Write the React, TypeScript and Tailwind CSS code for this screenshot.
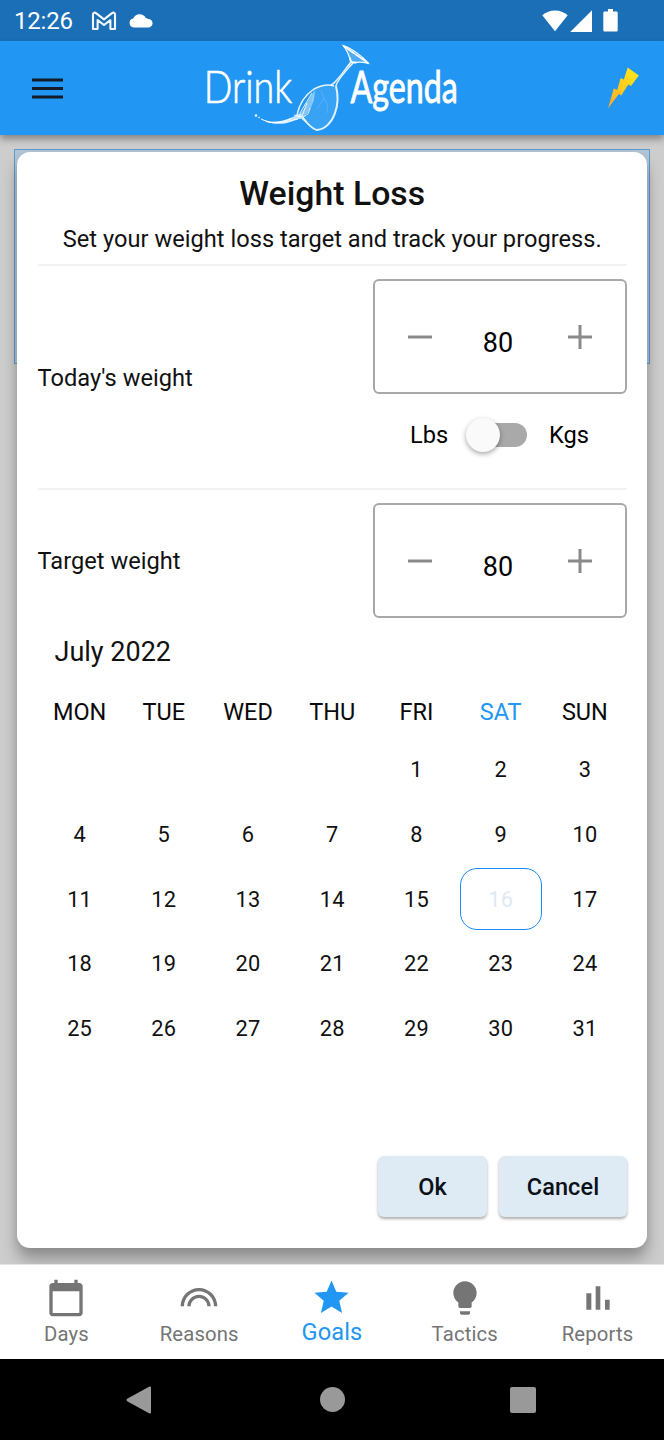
import type { ReactNode } from "react";

const WEEKDAYS = ["MON", "TUE", "WED", "THU", "FRI", "SAT", "SUN"];
const LEADING_BLANKS = 4;
const DAYS: (number | null)[] = [
  ...Array.from({ length: LEADING_BLANKS }, () => null),
  ...Array.from({ length: 31 }, (_, i) => i + 1),
];
const TODAY = 16;

function StatusBar() {
  return (
    <div className="flex h-[41px] shrink-0 items-center bg-[#1a6fb6] pl-3.5 text-white">
      <span className="w-[77px] pt-px text-[24px] leading-7 tracking-[-0.2px] whitespace-nowrap">12:26</span>
      <svg className="h-5 w-[26px]" viewBox="0 0 26 20" fill="none" stroke="#f4f7ff" strokeWidth="2.1" strokeLinejoin="round">
        <path d="M2 18V3.2C2 1.6 3.8 1.2 5 2.2L13 8.3l8-6.1c1.2-1 3-.6 3 1V18h-4.6V9.2L13 14 6.6 9.2V18z" />
      </svg>
      <svg className="ml-3 h-[14px] w-6" viewBox="0 0 24 14" fill="#fff">
        <path d="M4.8 13.5a4.5 4.5 0 0 1-.6-8.9A7 7 0 0 1 16.8 4a4.8 4.8 0 0 1 2.2.9 4.3 4.3 0 0 1 .5 8.6z" />
      </svg>
      <div className="ml-auto mr-[46px] flex items-center">
        <svg className="h-[22px] w-[26px]" viewBox="0 0 26 22" fill="#fff">
          <path d="M.3 5.3a19 19 0 0 1 25.4 0L13 21.2z" />
        </svg>
        <svg className="ml-0.5 h-[22px] w-[22px]" viewBox="0 0 22 22" fill="#fff">
          <path d="M22 .3V22H.2z" />
        </svg>
        <svg className="ml-[11px] h-[23px] w-[15px]" viewBox="0 0 15 23" fill="#fff">
          <path d="M5 0h5v2.5h3.2c1 0 1.5.5 1.5 1.5v17c0 1-.5 1.6-1.5 1.6H1.8C.8 22.6.3 22 .3 21V4c0-1 .5-1.5 1.5-1.5H5z" />
        </svg>
      </div>
    </div>
  );
}

function Logo() {
  return (
    <svg className="h-[94px] w-[270px] overflow-visible" viewBox="197 41 270 94" fill="none">
      <g fill="#fff" fontFamily="Lato, sans-serif">
        <g transform="translate(203.7 103) scale(.86 1)">
          <text fontSize="45.5" fontWeight="300" stroke="#fff" strokeWidth=".7" textLength="103" lengthAdjust="spacingAndGlyphs">Drink</text>
        </g>
        <g transform="translate(350.5 103) scale(.71 1)">
          <text fontSize="44" fontWeight="400" stroke="#fff" strokeWidth=".9" textLength="151" lengthAdjust="spacingAndGlyphs">Agenda</text>
        </g>
      </g>
      <path d="M313 90c7-5 17-6 23-4 3 8 2 20-1 28-4 9-10 16-18 16-6-2-10-8-14-11 6-3 10-14 10-29z" fill="#8ccbff" fillOpacity=".22" />
      <path d="M317 130c-6-1-10-8-15-12" stroke="#e2f3ff" strokeWidth="1.7" />
      <path d="M316 130c9 0 16-8 19-17 3-8 3-19 1-27" stroke="#e2f3ff" strokeWidth="2" />
      <path d="M297 115c2-10 8-20 17-26 6-3 14-5 20-3" stroke="#e5f4ff" strokeWidth="1.5" />
      <path d="M297 117c7-5 9-15 18-27l-1 10-4 10-8 9z" fill="#d7eeff" fillOpacity=".55" />
      <path d="M302 116l5-13m-7 10 12-20m-9 24c6-2 6-6 7-9" stroke="#e6f5ff" strokeWidth="1" />
      <path d="M324 98c3 4 4 9 3 15m-6-22 3 7-7 11" stroke="#a2d4ff" strokeOpacity=".35" strokeWidth=".8" />
      <path d="M331 85c6-3 14-16 20-23M336 86c1-6 11-16 17-23" stroke="#f0f9ff" strokeWidth="1.4" />
      <path d="M333.5 84.5l18.5-22" stroke="#bfe2ff" strokeWidth=".9" />
      <path d="M343.3 45.6c4 5 6 10 7 15.5l4 2c4-2 9-1 14 .2-5-6-18-16-25-17.7z" fill="#a3d4fa" fillOpacity=".35" stroke="#f2faff" strokeWidth="1.2" />
      <path d="M343.5 46l25 17.3" stroke="#fff" strokeWidth="1.6" />
      <path d="M349.5 57l2 5 5 .5" stroke="#fff" strokeWidth="1.5" />
      <path d="M261 118.5c10 5 20 3 28 0 4-2 8-3 12-6l1 6c-5 0-11 4-17 5-9 1-17 0-24-5z" fill="#dff2ff" fillOpacity=".85" />
      <path d="M261 119c13 7 25 3 37 0M266 121.5c10 3 18 0 25-3M294 115l9 2 4 5" stroke="#fff" strokeWidth=".9" />
      <circle cx="256" cy="115.5" r="1.3" fill="#e8f6ff" />
      <circle cx="259" cy="117.5" r=".8" fill="#e8f6ff" />
    </svg>
  );
}

function AppBar() {
  return (
    <header className="relative z-10 flex h-[94px] shrink-0 items-center bg-[#2196f3] pl-8 pr-[25px] shadow-[0_4px_7px_rgba(0,0,0,0.35)]">
      <svg className="h-[21px] w-[31px]" viewBox="0 0 31 21" fill="#141d27">
        <path d="M0 .5h31v3H0zM0 9h31v3H0zM0 17.5h31v3H0z" />
      </svg>
      <div className="ml-[134px]">
        <Logo />
      </div>
      <svg className="ml-auto h-[42px] w-8" viewBox="607 67 32 42">
        <defs>
          <linearGradient id="bolt" x1="0" y1="1" x2="1" y2="0">
            <stop offset="0" stopColor="#ffa62c" />
            <stop offset=".5" stopColor="#ffcb1f" />
            <stop offset="1" stopColor="#ffee18" />
          </linearGradient>
        </defs>
        <path d="M627.7 67.5 638.8 75.5 631 86l-2.7-1.5-7 11-2.5-1.5L608 108.5l5.7-20 3.5 1.5 3.4-12 3.2 1.5z" fill="url(#bolt)" />
      </svg>
    </header>
  );
}

function WeightStepper() {
  return (
    <div className="flex h-[115px] w-[254px] shrink-0 items-center justify-between rounded-md border-2 border-[#a8a8a8] px-[33px]">
      <svg className="h-6 w-6" viewBox="0 0 24 24" stroke="#8a8a8a" strokeWidth="3">
        <path d="M0 12h24" />
      </svg>
      <span className="mr-1 pt-[13px] text-[27px] leading-8 text-black">80</span>
      <svg className="h-6 w-6" viewBox="0 0 24 24" stroke="#8a8a8a" strokeWidth="3">
        <path d="M0 12h24M12 0v24" />
      </svg>
    </div>
  );
}

function UnitSwitch() {
  return (
    <div className="flex h-[82px] items-center pl-[37px] text-[23.6px] text-black">
      <span className="w-[56px] pt-px">Lbs</span>
      <div className="flex h-6 w-[61px] items-center rounded-full bg-[linear-gradient(90deg,transparent_16px,#a9a9a9_16px)]">
        <span className="h-[34px] w-[34px] rounded-full bg-[#fafafa] shadow-[0_2px_5px_rgba(0,0,0,0.35)]" />
      </div>
      <span className="ml-[22px] pt-px">Kgs</span>
    </div>
  );
}

function Calendar() {
  return (
    <section className="mt-[17px] flex flex-col">
      <h2 className="pl-[17px] text-[27px] leading-[34px] text-[#111]">July 2022</h2>
      <div className="mt-[26px] grid grid-cols-7 text-center text-[23.5px] leading-[34px] text-[#0a0a0a]">
        {WEEKDAYS.map((d) => (
          <span key={d} className={d === "SAT" ? "text-[#2196f3]" : ""}>{d}</span>
        ))}
      </div>
      <div className="mt-2 grid auto-rows-[64.8px] grid-cols-7 text-[21.8px] tracking-[0.2px] text-[#111]">
        {DAYS.map((d, i) => (
          <div key={i} className="flex p-px">
            <span
              className={
                d === TODAY
                  ? "flex flex-1 items-center justify-center rounded-[17px] border-[1.5px] border-[#1a8cf5] pt-0.5 text-[#dfeaf4]"
                  : "flex flex-1 items-center justify-center pt-0.5"
              }
            >
              {d}
            </span>
          </div>
        ))}
      </div>
    </section>
  );
}

function DialogButton({ children, className }: { children: ReactNode; className: string }) {
  return (
    <button
      className={`h-[61px] rounded-md bg-[#deeaf4] pt-0.5 text-[23.5px] font-medium tracking-[0.1px] text-[#0b1118] shadow-[0_2px_3px_rgba(0,0,0,0.32)] ${className}`}
    >
      {children}
    </button>
  );
}

function WeightDialog() {
  return (
    <div className="relative mx-[17px] mt-[17px] flex h-[1096px] flex-col rounded-[13px] bg-white pl-[20.5px] pr-[20px] shadow-[0_12px_16px_rgba(0,0,0,0.28),0_3px_8px_rgba(0,0,0,0.08)]">
      <h1 className="pt-[22px] text-center text-[33.8px] leading-10 font-medium text-[#111]">Weight Loss</h1>
      <p className="mt-[9px] text-center text-[23.6px] leading-8 tracking-[0.03px] whitespace-nowrap text-[#111]">
        Set your weight loss target and track your progress.
      </p>
      <div className="mt-[9px] h-[224px] border-t-2 border-[#f2f2f2] pt-[13px]">
        <div className="flex justify-between">
          <span className="pt-[83px] text-[23.6px] leading-8 tracking-[0.03px] text-[#111]">Today's weight</span>
          <div className="flex flex-col">
            <WeightStepper />
            <UnitSwitch />
          </div>
        </div>
      </div>
      <div className="flex items-center justify-between border-t-2 border-[#f2f2f2] pt-[13px]">
        <span className="text-[23.6px] leading-8 tracking-[0.03px] text-[#111]">Target weight</span>
        <WeightStepper />
      </div>
      <Calendar />
      <div className="mt-auto mb-[31px] flex justify-end gap-3">
        <DialogButton className="w-[109px]">Ok</DialogButton>
        <DialogButton className="w-[128px]">Cancel</DialogButton>
      </div>
    </div>
  );
}

const NAV_ITEMS: { label: string; icon: ReactNode }[] = [
  {
    label: "Days",
    icon: (
      <path d="M20 3h-1V1h-2v2H7V1H5v2H4c-1.1 0-2 .9-2 2v16c0 1.1.9 2 2 2h16c1.1 0 2-.9 2-2V5c0-1.1-.9-2-2-2zm0 18H4V8h16v13z" />
    ),
  },
  {
    label: "Reasons",
    icon: (
      <path d="M12 6C5.93 6 1 10.93 1 17h2c0-4.96 4.04-9 9-9s9 4.04 9 9h2c0-6.07-4.93-11-11-11zm0 4c-3.86 0-7 3.14-7 7h2c0-2.76 2.24-5 5-5s5 2.24 5 5h2c0-3.86-3.14-7-7-7z" />
    ),
  },
  {
    label: "Goals",
    icon: <path d="M12 17.27 18.18 21l-1.64-7.03L22 9.24l-7.19-.61L12 2 9.19 8.63 2 9.24l5.46 4.73L5.82 21z" />,
  },
  {
    label: "Tactics",
    icon: (
      <path d="M9 21c0 .55.45 1 1 1h4c.55 0 1-.45 1-1v-1H9v1zm3-19C8.14 2 5 5.14 5 9c0 2.38 1.19 4.47 3 5.74V17c0 .55.45 1 1 1h6c.55 0 1-.45 1-1v-2.26c1.81-1.27 3-3.36 3-5.74 0-3.86-3.14-7-7-7z" />
    ),
  },
  {
    label: "Reports",
    icon: <path d="M5 9.2h3V19H5zM10.6 5h2.8v14h-2.8zm5.6 8H19v6h-2.8z" />,
  },
];

function BottomNav() {
  return (
    <nav className="relative flex h-[95px] shrink-0 border-t border-[#e4e4e4] bg-white">
      {NAV_ITEMS.map(({ label, icon }) => {
        const active = label === "Goals";
        return (
          <div
            key={label}
            className={
              active
                ? "flex flex-1 flex-col items-center pt-3 text-[#2196f3]"
                : "flex flex-1 flex-col items-center pt-[13px] text-[#757575]"
            }
          >
            <svg className={active ? "h-[41px] w-[41px]" : "h-10 w-10"} viewBox="0 0 24 24" fill="currentColor">
              {icon}
            </svg>
            <span
              className={
                active
                  ? "pt-px text-[23.6px] leading-[27px] tracking-[0.1px]"
                  : "pt-1 text-[20.3px] leading-6 tracking-[0.15px]"
              }
            >
              {label}
            </span>
          </div>
        );
      })}
    </nav>
  );
}

function SystemNav() {
  return (
    <div className="flex h-[81px] shrink-0 items-center justify-between bg-black pl-[126px] pr-[128px]">
      <svg className="h-7 w-[26px]" viewBox="0 0 26 28" fill="#999">
        <path d="M1.2 12.8 23 .7c1.3-.7 2-.2 2 1.2v24.2c0 1.4-.7 1.9-2 1.2L1.2 15.2c-1-.6-1-1.8 0-2.4z" />
      </svg>
      <span className="ml-0.5 h-[25px] w-[25px] rounded-full bg-[#999]" />
      <span className="h-[26px] w-[26px] rounded-[2px] bg-[#999]" />
    </div>
  );
}

export default function App() {
  return (
    <div className="flex h-[1440px] w-[664px] flex-col overflow-hidden bg-black font-[Roboto,sans-serif]">
      <StatusBar />
      <AppBar />
      <main className="relative h-[1129px] shrink-0 overflow-hidden bg-[#cdcdcd]">
        <div className="absolute top-[14px] left-[14px] h-[215px] w-[636px] border-[1.5px] border-[#5a9bd2] bg-[#b4c6d6]" />
        <WeightDialog />
      </main>
      <BottomNav />
      <SystemNav />
    </div>
  );
}
